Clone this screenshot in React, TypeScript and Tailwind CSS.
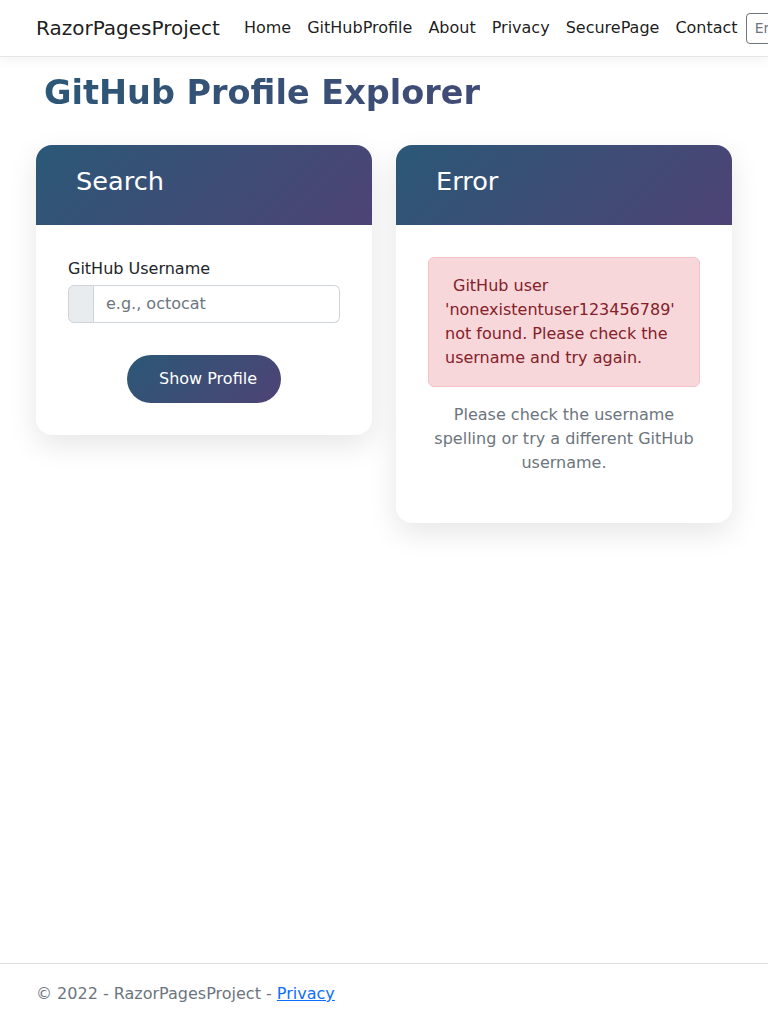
const font = { fontFamily: '"DejaVu Sans", "Noto Sans", sans-serif' };

const navLinks = ['Home', 'GitHubProfile', 'About', 'Privacy', 'SecurePage', 'Contact'];

function CardHeader({ title }: { title: string }) {
  return (
    <div className="bg-[linear-gradient(135deg,#2b5876,#4e4376)] px-10 pt-5 pb-7 rounded-t-2xl">
      <h2 className="text-white text-[25.6px] leading-8">{title}</h2>
    </div>
  );
}

export default function App() {
  return (
    <div className="min-h-[1024px] flex flex-col overflow-hidden bg-white text-[#212529]" style={font}>
      {/* navbar */}
      <header className="border-b border-[#e5e5e5] shadow-[0_4px_12px_rgba(0,0,0,0.05)] bg-white">
        <nav className="mx-auto w-[720px] px-3 py-2 flex items-center whitespace-nowrap">
          <span className="text-[20px] leading-[30px] py-[5px] mr-4 text-black/90">RazorPagesProject</span>
          <ul className="flex items-center">
            {navLinks.map((l) => (
              <li key={l} className="px-2 py-2 leading-6 text-black/90">
                {l}
              </li>
            ))}
          </ul>
          <div className="h-[31px] w-[120px] shrink-0 border border-[#6c757d] rounded-[4px] px-2 text-[14px] leading-[29px] text-[#6c757d]">
            Email
          </div>
        </nav>
      </header>

      <main className="mx-auto w-[720px] px-3 pt-4 pb-4">
        <h1 className="pl-2 text-[33.5px] leading-10 font-bold bg-[linear-gradient(135deg,#2b5876,#4e4376)] bg-clip-text text-transparent">
          GitHub Profile Explorer
        </h1>

        <div className="mt-8 grid grid-cols-2 gap-6 items-start">
          {/* search card */}
          <div className="rounded-2xl bg-white shadow-[0_10px_30px_rgba(0,0,0,0.1)]">
            <CardHeader title="Search" />
            <div className="p-8">
              <label className="block leading-6 mb-1">GitHub Username</label>
              <div className="flex h-[38px]">
                <span className="w-[26px] bg-[#e9ecef] border border-[#ced4da] rounded-l-md" />
                <input
                  className="flex-1 min-w-0 border border-l-0 border-[#ced4da] rounded-r-md px-3 leading-6 outline-none placeholder:text-[#6c757d]"
                  placeholder="e.g., octocat"
                  style={font}
                />
              </div>
              <div className="mt-8 flex justify-center">
                <button
                  className="h-12 pl-8 pr-6 rounded-full bg-[linear-gradient(135deg,#2b5876,#4e4376)] text-white leading-6"
                  style={font}
                >
                  Show Profile
                </button>
              </div>
            </div>
          </div>

          {/* error card */}
          <div className="rounded-2xl bg-white shadow-[0_10px_30px_rgba(0,0,0,0.1)]">
            <CardHeader title="Error" />
            <div className="p-8">
              <div className="bg-[#f8d7da] border border-[#f5c2c7] text-[#842029] rounded-md p-4 leading-6 mb-4">
                <span className="inline-block w-0 mr-2" />
                GitHub user 'nonexistentuser123456789' not found. Please check the username and try again.
              </div>
              <p className="text-center text-[#6c757d] leading-6 mb-4">
                Please check the username spelling or try a different GitHub username.
              </p>
            </div>
          </div>
        </div>
      </main>

      <footer className="mt-auto border-t border-[#dee2e6] h-[61px]">
        <div className="mx-auto w-[720px] px-3 leading-[60px] text-[#6c757d]">
          © 2022 - RazorPagesProject - <a className="text-[#0d6efd] underline">Privacy</a>
        </div>
      </footer>
    </div>
  );
}
